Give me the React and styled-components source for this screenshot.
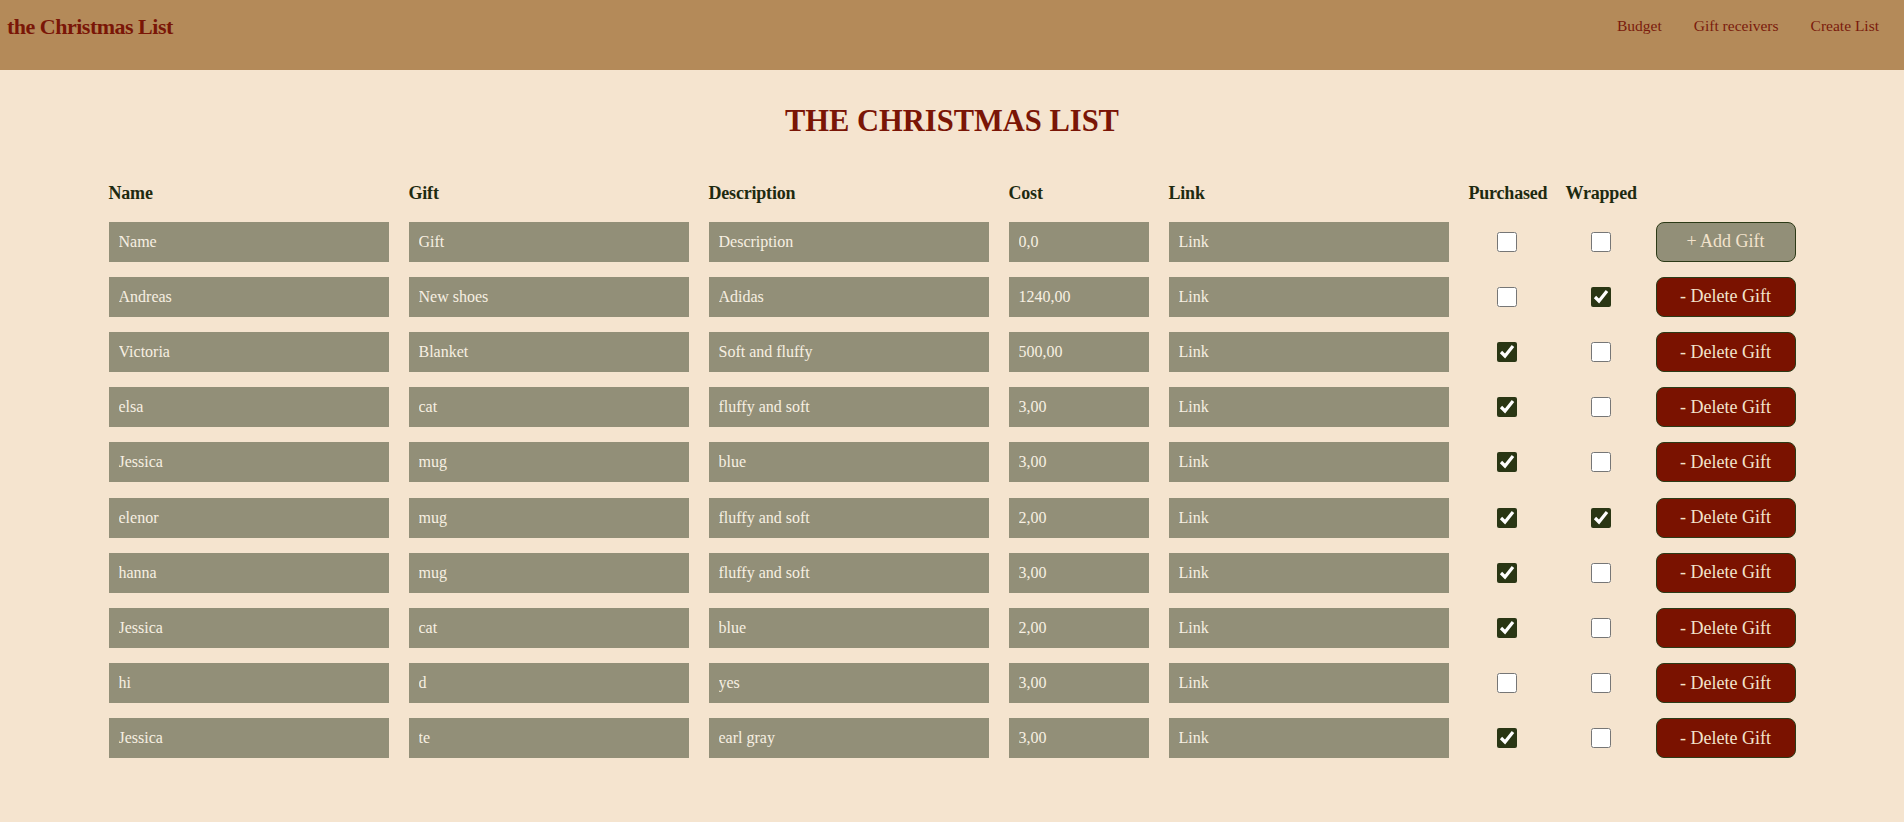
import { useState } from 'react';
import styled, { createGlobalStyle } from 'styled-components';

const GlobalStyle = createGlobalStyle`
  body {
    margin: 0;
    background-color: #f5e4cf;
    font-family: 'Liberation Serif', 'Times New Roman', serif;
  }
`;

const initialGifts = [
  { name: 'Andreas', gift: 'New shoes', description: 'Adidas', cost: '1240,00', purchased: false, wrapped: true },
  { name: 'Victoria', gift: 'Blanket', description: 'Soft and fluffy', cost: '500,00', purchased: true, wrapped: false },
  { name: 'elsa', gift: 'cat', description: 'fluffy and soft', cost: '3,00', purchased: true, wrapped: false },
  { name: 'Jessica', gift: 'mug', description: 'blue', cost: '3,00', purchased: true, wrapped: false },
  { name: 'elenor', gift: 'mug', description: 'fluffy and soft', cost: '2,00', purchased: true, wrapped: true },
  { name: 'hanna', gift: 'mug', description: 'fluffy and soft', cost: '3,00', purchased: true, wrapped: false },
  { name: 'Jessica', gift: 'cat', description: 'blue', cost: '2,00', purchased: true, wrapped: false },
  { name: 'hi', gift: 'd', description: 'yes', cost: '3,00', purchased: false, wrapped: false },
  { name: 'Jessica', gift: 'te', description: 'earl gray', cost: '3,00', purchased: true, wrapped: false },
];

export default function App() {
  const [gifts, setGifts] = useState(initialGifts);

  const toggle = (index, key) => {
    setGifts((prev) =>
      prev.map((g, i) => (i === index ? { ...g, [key]: !g[key] } : g))
    );
  };

  const removeGift = (index) => {
    setGifts((prev) => prev.filter((_, i) => i !== index));
  };

  return (
    <>
      <GlobalStyle />
      <Navbar>
        <Logo>the Christmas List</Logo>
        <NavLinks>
          <NavLink>Budget</NavLink>
          <NavLink>Gift receivers</NavLink>
          <NavLink>Create List</NavLink>
        </NavLinks>
      </Navbar>

      <Main>
        <Title>THE CHRISTMAS LIST</Title>

        <Table>
          <HeadCell>Name</HeadCell>
          <HeadCell>Gift</HeadCell>
          <HeadCell>Description</HeadCell>
          <HeadCell>Cost</HeadCell>
          <HeadCell>Link</HeadCell>
          <HeadCell $center>Purchased</HeadCell>
          <HeadCell $center>Wrapped</HeadCell>
          <HeadCell />

          <Field placeholder="Name" />
          <Field placeholder="Gift" />
          <Field placeholder="Description" />
          <Field defaultValue="0,0" />
          <Field placeholder="Link" />
          <CheckCell><Check type="checkbox" /></CheckCell>
          <CheckCell><Check type="checkbox" /></CheckCell>
          <Button>+ Add Gift</Button>

          {gifts.map((g, i) => (
            <Row key={i}>
              <Field defaultValue={g.name} />
              <Field defaultValue={g.gift} />
              <Field defaultValue={g.description} />
              <Field defaultValue={g.cost} />
              <Field placeholder="Link" />
              <CheckCell>
                <Check type="checkbox" checked={g.purchased} onChange={() => toggle(i, 'purchased')} />
              </CheckCell>
              <CheckCell>
                <Check type="checkbox" checked={g.wrapped} onChange={() => toggle(i, 'wrapped')} />
              </CheckCell>
              <Button $danger onClick={() => removeGift(i)}>- Delete Gift</Button>
            </Row>
          ))}
        </Table>
      </Main>
    </>
  );
}

const Navbar = styled.header`
  display: flex;
  justify-content: space-between;
  align-items: flex-start;
  height: 70px;
  padding: 0 25px 0 7px;
  background-color: #b48a59;
`;

const Logo = styled.div`
  margin-top: 14px;
  font-size: 22px;
  font-weight: bold;
  color: #7a1607;
  letter-spacing: -0.5px;
`;

const NavLinks = styled.nav`
  display: flex;
  gap: 32px;
  margin-top: 17px;
`;

const NavLink = styled.a`
  font-size: 15.5px;
  color: #7a1a0c;
  cursor: pointer;
`;

const Main = styled.main`
  display: flex;
  flex-direction: column;
  align-items: center;
  padding-bottom: 60px;
`;

const Title = styled.h1`
  margin: 34px 0 43.5px;
  font-size: 30.5px;
  font-weight: bold;
  color: #7a1506;
`;

const Table = styled.div`
  display: grid;
  grid-template-columns: 280px 280px 280px 140px 280px 77px 70px 140px;
  column-gap: 20px;
  row-gap: 15.2px;
  align-items: center;
`;

const Row = styled.div`
  display: contents;
`;

const HeadCell = styled.div`
  padding-bottom: 3px;
  font-size: 18px;
  font-weight: bold;
  color: #1e2a10;
  white-space: nowrap;
  letter-spacing: -0.2px;
  text-align: ${({ $center }) => ($center ? 'center' : 'left')};
`;

const Field = styled.input`
  box-sizing: border-box;
  width: 100%;
  height: 40px;
  padding: 0 10px;
  border: none;
  outline: none;
  background-color: #928f78;
  color: #f7efe2;
  font-family: inherit;
  font-size: 16px;

  &::placeholder {
    color: #f7efe2;
    opacity: 1;
  }
`;

const CheckCell = styled.div`
  display: flex;
  justify-content: center;
  align-items: center;
`;

const Check = styled.input`
  width: 20px;
  height: 20px;
  margin: 0;
  accent-color: #2a3614;
  cursor: pointer;
`;

const Button = styled.button`
  box-sizing: border-box;
  height: 40px;
  border: 1px solid #2c3a17;
  border-radius: 8px;
  background-color: ${({ $danger }) => ($danger ? '#7a1200' : '#928f78')};
  color: #f3e3cc;
  font-family: inherit;
  font-size: 18px;
  cursor: pointer;
`;
